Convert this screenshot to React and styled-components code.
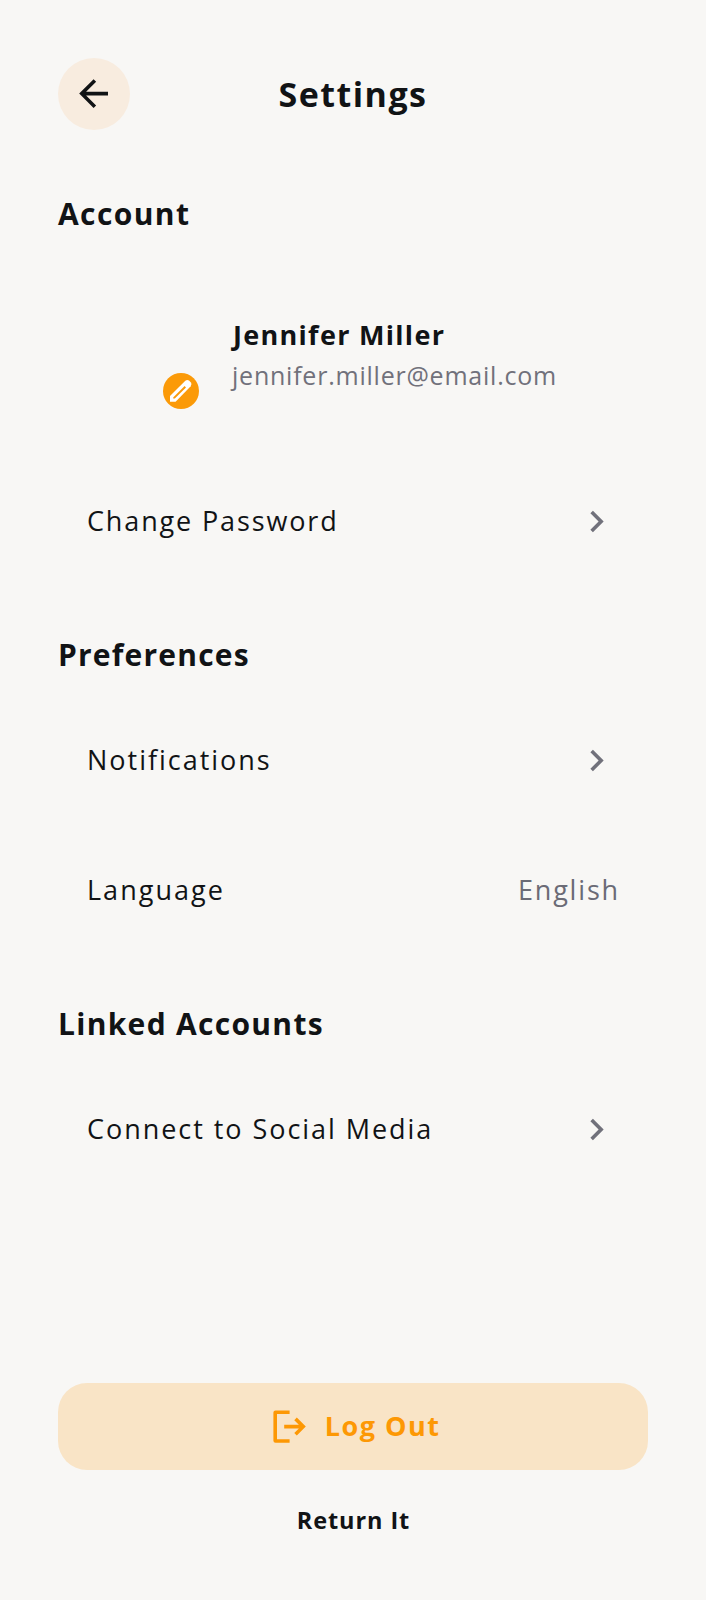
import React from "react";
import styled, { createGlobalStyle } from "styled-components";

const GlobalStyle = createGlobalStyle`
  * { box-sizing: border-box; }
  body {
    margin: 0;
    background: #f8f7f5;
    color: #111315;
    font-family: "Open Sans", "Noto Sans", sans-serif;
  }
  button {
    border: 0;
    padding: 0;
    background: none;
    color: inherit;
    font-family: inherit;
    cursor: pointer;
  }
`;

const Screen = styled.main`
  display: flex;
  flex-direction: column;
  width: 706px;
  height: 1600px;
  padding: 58px 58px 60px;
  overflow: hidden;
`;

const Header = styled.header`
  display: grid;
  grid-template-columns: 72px 1fr 72px;
  align-items: center;
  height: 72px;
  margin-bottom: 64px;
`;

const BackButton = styled.button`
  display: flex;
  align-items: center;
  justify-content: center;
  width: 72px;
  height: 72px;
  border-radius: 50%;
  background: #f8ecdf;
`;

const Title = styled.h1`
  margin: 0;
  text-align: center;
  font-size: 34px;
  line-height: 48px;
  font-weight: 700;
  letter-spacing: 1.47px;
`;

const Section = styled.section`
  display: flex;
  flex-direction: column;
  margin-bottom: 49px;
`;

const SectionTitle = styled.h2`
  margin: 0 0 21px;
  padding-top: 1px;
  font-size: 30px;
  line-height: 38px;
  font-weight: 700;
  letter-spacing: ${(p) => p.$tracking}px;
`;

const Profile = styled.div`
  display: flex;
  align-items: center;
  gap: 33px;
  height: 202px;
  padding-left: 29px;
`;

const Avatar = styled.div`
  position: relative;
  width: 112px;
  height: 112px;
  border-radius: 50%;
`;

const EditBadge = styled.button`
  position: absolute;
  right: 0;
  bottom: 2px;
  width: 36px;
  height: 36px;
  border-radius: 50%;
  background: #fb9a08;

  svg {
    display: block;
  }
`;

const Identity = styled.div`
  display: flex;
  flex-direction: column;
  white-space: nowrap;
`;

const Name = styled.strong`
  padding-left: 1px;
  font-size: 27px;
  line-height: 41px;
  font-weight: 700;
  letter-spacing: 1.3px;
`;

const Email = styled.span`
  color: #71717b;
  font-size: 25px;
  line-height: 41px;
  font-weight: 400;
  letter-spacing: 0.77px;
`;

const Row = styled.div`
  display: flex;
  align-items: center;
  justify-content: space-between;
  height: 130px;
  padding: 0 29px;
  white-space: nowrap;
`;

const RowLabel = styled.span`
  font-size: 27px;
  line-height: 40px;
  font-weight: 400;
  letter-spacing: ${(p) => p.$tracking}px;
`;

const RowValue = styled(RowLabel)`
  color: #6b6b76;
  margin-right: -1px;
`;

const Chevron = styled.svg`
  width: 43px;
  height: 43px;
  margin-right: 1.5px;
  fill: #71717b;
`;

const Footer = styled.footer`
  display: flex;
  flex-direction: column;
  align-items: center;
  gap: 30px;
  margin-top: auto;
`;

const LogOutButton = styled.button`
  display: flex;
  align-items: center;
  justify-content: center;
  gap: 14px;
  width: 100%;
  height: 87px;
  padding-left: 2px;
  border-radius: 29px;
  background: #f9e4c6;
  color: #fd9804;
  font-size: 27px;
  line-height: 40px;
  font-weight: 700;
  letter-spacing: 1.5px;
`;

const LogOutLabel = styled.span`
  padding-bottom: 2px;
`;

const ReturnLink = styled.button`
  height: 40px;
  padding-left: 1px;
  font-size: 23.5px;
  line-height: 40px;
  font-weight: 700;
  letter-spacing: 0.9px;
`;

const NavRow = ({ label, tracking }) => (
  <Row>
    <RowLabel $tracking={tracking}>{label}</RowLabel>
    <Chevron viewBox="0 0 24 24">
      <path d="M10 6 8.59 7.41 13.17 12l-4.58 4.59L10 18l6-6z" />
    </Chevron>
  </Row>
);

export default function App() {
  return (
    <>
      <GlobalStyle />
      <Screen>
        <Header>
          <BackButton aria-label="Back">
            <svg width="43.2" height="43.2" viewBox="0 0 24 24" fill="#111315">
              <path d="M20 11H7.83l5.59-5.59L12 4l-8 8 8 8 1.41-1.41L7.83 13H20z" />
            </svg>
          </BackButton>
          <Title>Settings</Title>
        </Header>

        <Section>
          <SectionTitle $tracking={1.4}>Account</SectionTitle>
          <Profile>
            <Avatar>
              <EditBadge aria-label="Edit photo">
                <svg width="36" height="36" viewBox="0 0 36 36">
                  <path d="M7 28.8V23L22.3 7.8q2-1.8 4 0l1.4 1.4q1.8 2 0 4L12.6 28.8z" fill="#fff" />
                  <path d="m10.2 25.6.2-1.4L21.6 13l1.4 1.4-11.2 11.2z" fill="#fb9a08" />
                </svg>
              </EditBadge>
            </Avatar>
            <Identity>
              <Name>Jennifer Miller</Name>
              <Email>jennifer.miller@email.com</Email>
            </Identity>
          </Profile>
          <NavRow label="Change Password" tracking={1.86} />
        </Section>

        <Section>
          <SectionTitle $tracking={1.2}>Preferences</SectionTitle>
          <NavRow label="Notifications" tracking={1.98} />
          <Row>
            <RowLabel $tracking={2.03}>Language</RowLabel>
            <RowValue $tracking={1.83}>English</RowValue>
          </Row>
        </Section>

        <Section>
          <SectionTitle $tracking={1.3}>Linked Accounts</SectionTitle>
          <NavRow label="Connect to Social Media" tracking={1.95} />
        </Section>

        <Footer>
          <LogOutButton>
            <svg width="43.2" height="43.2" viewBox="0 0 24 24" fill="currentColor">
              <path d="M4.2 3H12v2H5v14h7v2H4.2Q3 21 3 19.8V4.2Q3 3 4.2 3z" />
              <path d="m16 17-1.4-1.45L17.15 13H9v-2h8.15L14.6 8.45 16 7l5 5z" />
            </svg>
            <LogOutLabel>Log Out</LogOutLabel>
          </LogOutButton>
          <ReturnLink>Return It</ReturnLink>
        </Footer>
      </Screen>
    </>
  );
}
